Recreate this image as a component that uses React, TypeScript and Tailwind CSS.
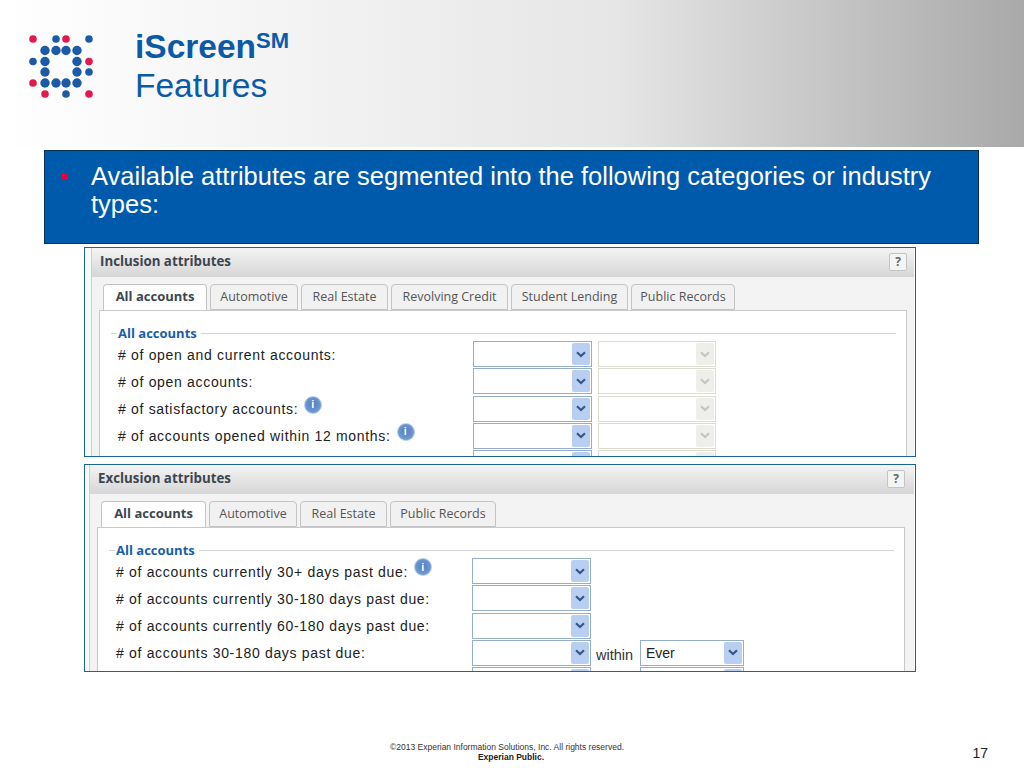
const arial = "font-['Liberation_Sans',Arial,sans-serif]";

const Logo = () => {
  const dots = [
    [33, 39, 1], [56, 39, 0], [66, 39, 1], [89, 39, 0],
    [33, 61.5, 0], [89, 61.5, 1], [89, 72, 0], [33, 83, 1],
    [45, 94, 1], [66, 94, 0], [89, 94, 1],
  ];
  const inner = [
    [45, 50.5], [56, 50.5], [66, 50.5], [77, 50.5],
    [45, 61.5], [77, 61.5], [45, 72], [77, 72],
    [45, 83], [56, 83], [66, 83], [77, 83],
  ];
  return (
    <svg width="70" height="70" viewBox="28 33 70 70" className="shrink-0">
      {dots.map(([x, y, red]) => (
        <circle key={`${x}-${y}`} cx={x} cy={y} r="3.8" fill={red ? "#e2194f" : "#1c5aa6"} />
      ))}
      {inner.map(([x, y]) => (
        <circle key={`${x}-${y}`} cx={x} cy={y} r="4.7" fill="#1c5aa6" />
      ))}
    </svg>
  );
};

const InfoIcon = () => (
  <span className="ml-[6px] -mt-[10px] flex h-[18px] w-[18px] items-center justify-center rounded-full border border-[#b9cfeb] bg-[radial-gradient(circle_at_50%_45%,#4f7fc0,#7fa6da)] font-['Liberation_Sans',sans-serif] text-[11px] font-bold leading-none text-white">
    i
  </span>
);

const Chevron = ({ color }: { color: string }) => (
  <svg width="10" height="7" viewBox="0 0 10 7">
    <path d="M1 1.2 L5 5 L9 1.2" fill="none" stroke={color} strokeWidth="2.2" />
  </svg>
);

const Select = ({ width, disabled, value }: { width: string; disabled?: boolean; value?: string }) => (
  <div
    className={`${width} flex h-[26px] shrink-0 items-center justify-between border bg-white pl-[5px] pr-px ${
      disabled ? "border-[#dcdcd0]" : "border-[#94aecb]"
    }`}
  >
    <span className={`${arial} mt-[2px] text-[14px] text-[#222]`}>{value}</span>
    <span
      className={`flex h-[22px] w-[18px] items-center justify-center rounded-[2px] ${disabled ? "bg-[#eeeeea]" : "bg-[#b9cff2]"}`}
    >
      <Chevron color={disabled ? "#c4c4c0" : "#34578a"} />
    </span>
  </div>
);

type Row = { label: string; info?: boolean; within?: boolean; clipped?: boolean };

const Panel = ({
  title,
  tabs,
  rows,
  second,
  compact,
  height,
}: {
  title: string;
  tabs: { name: string; width: string }[];
  rows: Row[];
  second?: boolean;
  compact?: boolean;
  height: string;
}) => (
  <div
    className={`${height} ml-[84px] w-[832px] overflow-hidden border border-[#1b6497] bg-[#f7fafd] pr-px font-['Open_Sans',sans-serif] ${
      compact ? "pl-[4px]" : "pl-[6px]"
    }`}
  >
    <div className="flex h-full flex-col border-l border-[#cfcfcf] bg-[#f3f3f3]">
      <div
        className={`flex h-[29px] shrink-0 items-center justify-between bg-gradient-to-b from-[#f4f4f4] to-[#d6d6d6] pb-[2px] pl-[8px] ${
          compact ? "pr-[9px]" : "pr-[7px]"
        }`}
      >
        <span className="text-[13.3px] font-bold text-[#3c4650]">{title}</span>
        <span className="flex h-[18px] w-[18px] items-center justify-center rounded-[2px] border border-[#c4c4c4] bg-[#f4f4f4] text-[12px] font-bold leading-none text-[#666]">
          ?
        </span>
      </div>
      <div className="mt-[7px] flex h-[26px] shrink-0 gap-[3px] pl-[11px] text-[12.5px] text-[#555]">
        {tabs.map((tab, i) => (
          <div
            key={tab.name}
            className={`${tab.width} flex items-center justify-center rounded-t-[4px] border border-[#c4c4c4] ${
              i === 0 ? "-mb-px border-b-0 bg-white pb-[2px] text-[13px] font-bold text-[#3c4650]" : "bg-[#f1f1f1]"
            }`}
          >
            {tab.name}
          </div>
        ))}
      </div>
      <div
        className={`ml-[7px] flex-1 border-l border-t border-r border-[#c9c9c9] bg-white pl-[18px] pr-[10px] ${
          compact ? "mr-[9px]" : "mr-[7px]"
        }`}
      >
        <div className="-ml-[7px] mt-[13px] flex h-[18px] items-center">
          <span className="h-px w-[6px] bg-[#d4d4d4]" />
          <span className="mx-[1px] text-[13px] font-bold leading-none text-[#1a5ea8]">All accounts</span>
          <span className="ml-[3px] h-px flex-1 bg-[#d4d4d4]" />
        </div>
        <div className="-mt-px flex flex-col gap-[1.3px]">
          {rows.map((row, i) => (
            <div key={i} className="flex h-[26px] items-center">
              <div
                className={`flex items-center pt-[2px] ${arial} text-[14px] tracking-[0.68px] text-[#222] ${
                  compact ? "w-[356px]" : "w-[355px]"
                }`}
              >
                <span>{row.label}</span>
                {row.info && <InfoIcon />}
              </div>
              <Select width="w-[119px]" />
              {second && (
                <div className="ml-[6px]">
                  <Select width="w-[118px]" disabled />
                </div>
              )}
              {row.within && (
                <div className="ml-[5px] flex items-center">
                  <span className={`${arial} mt-[6px] w-[44px] text-[14.5px] text-[#333]`}>within</span>
                  <Select width="w-[104px]" value="Ever" />
                </div>
              )}
              {row.clipped && (
                <div className="ml-[49px]">
                  <Select width="w-[104px]" />
                </div>
              )}
            </div>
          ))}
        </div>
      </div>
    </div>
  </div>
);

export default function App() {
  return (
    <div className={`flex h-[768px] w-[1024px] flex-col overflow-hidden bg-white ${arial}`}>
      <header className="flex h-[147px] shrink-0 items-start bg-gradient-to-r from-white via-[#e6e6e6] via-60% to-[#a9a9a9] pl-[28px] pt-[33px]">
        <Logo />
        <div className="ml-[37px] -mt-[2px] text-[#0b5aa8]">
          <div className="text-[33.5px] font-bold leading-[32px]">
            iScreen<sup className="relative -top-[10px] align-baseline text-[22px]">SM</sup>
          </div>
          <div className="mt-[4px] text-[33.5px] leading-[38px]">Features</div>
        </div>
      </header>

      <div className="ml-[44px] mt-[3px] flex h-[94px] w-[935px] shrink-0 border border-[#0b2f52] bg-[#005aab] pl-[17px] pr-[30px] pt-[11px] text-white">
        <span className="mt-[11px] h-[6px] w-[6px] shrink-0 bg-[#e8003d]" />
        <p className="ml-[23px] text-[25.5px] leading-[28px]">
          Available attributes are segmented into the following categories or industry types:
        </p>
      </div>

      <div className="mt-[3px] shrink-0">
        <Panel
          title="Inclusion attributes"
          height="h-[210px]"
          second
          tabs={[
            { name: "All accounts", width: "w-[104px]" },
            { name: "Automotive", width: "w-[88px]" },
            { name: "Real Estate", width: "w-[87px]" },
            { name: "Revolving Credit", width: "w-[117px]" },
            { name: "Student Lending", width: "w-[117px]" },
            { name: "Public Records", width: "w-[104px]" },
          ]}
          rows={[
            { label: "# of open and current accounts:" },
            { label: "# of open accounts:" },
            { label: "# of satisfactory accounts:", info: true },
            { label: "# of accounts opened within 12 months:", info: true },
            { label: "" },
          ]}
        />
      </div>

      <div className="mt-[7px] shrink-0">
        <Panel
          title="Exclusion attributes"
          height="h-[208px]"
          compact
          tabs={[
            { name: "All accounts", width: "w-[105px]" },
            { name: "Automotive", width: "w-[88px]" },
            { name: "Real Estate", width: "w-[87px]" },
            { name: "Public Records", width: "w-[106px]" },
          ]}
          rows={[
            { label: "# of accounts currently 30+ days past due:", info: true },
            { label: "# of accounts currently 30-180 days past due:" },
            { label: "# of accounts currently 60-180 days past due:" },
            { label: "# of accounts 30-180 days past due:", within: true },
            { label: "", clipped: true },
          ]}
        />
      </div>

      <footer className="relative mt-[70px] flex flex-col items-center pr-[10px] text-[8.5px] leading-[10px] text-[#333]">
        <span>©2013 Experian Information Solutions, Inc. All rights reserved.</span>
        <span className="ml-[8px] font-bold text-[#222]">Experian Public.</span>
        <span className="absolute right-[36px] top-[3px] text-[14px] leading-[16px] text-[#222]">17</span>
      </footer>
    </div>
  );
}
